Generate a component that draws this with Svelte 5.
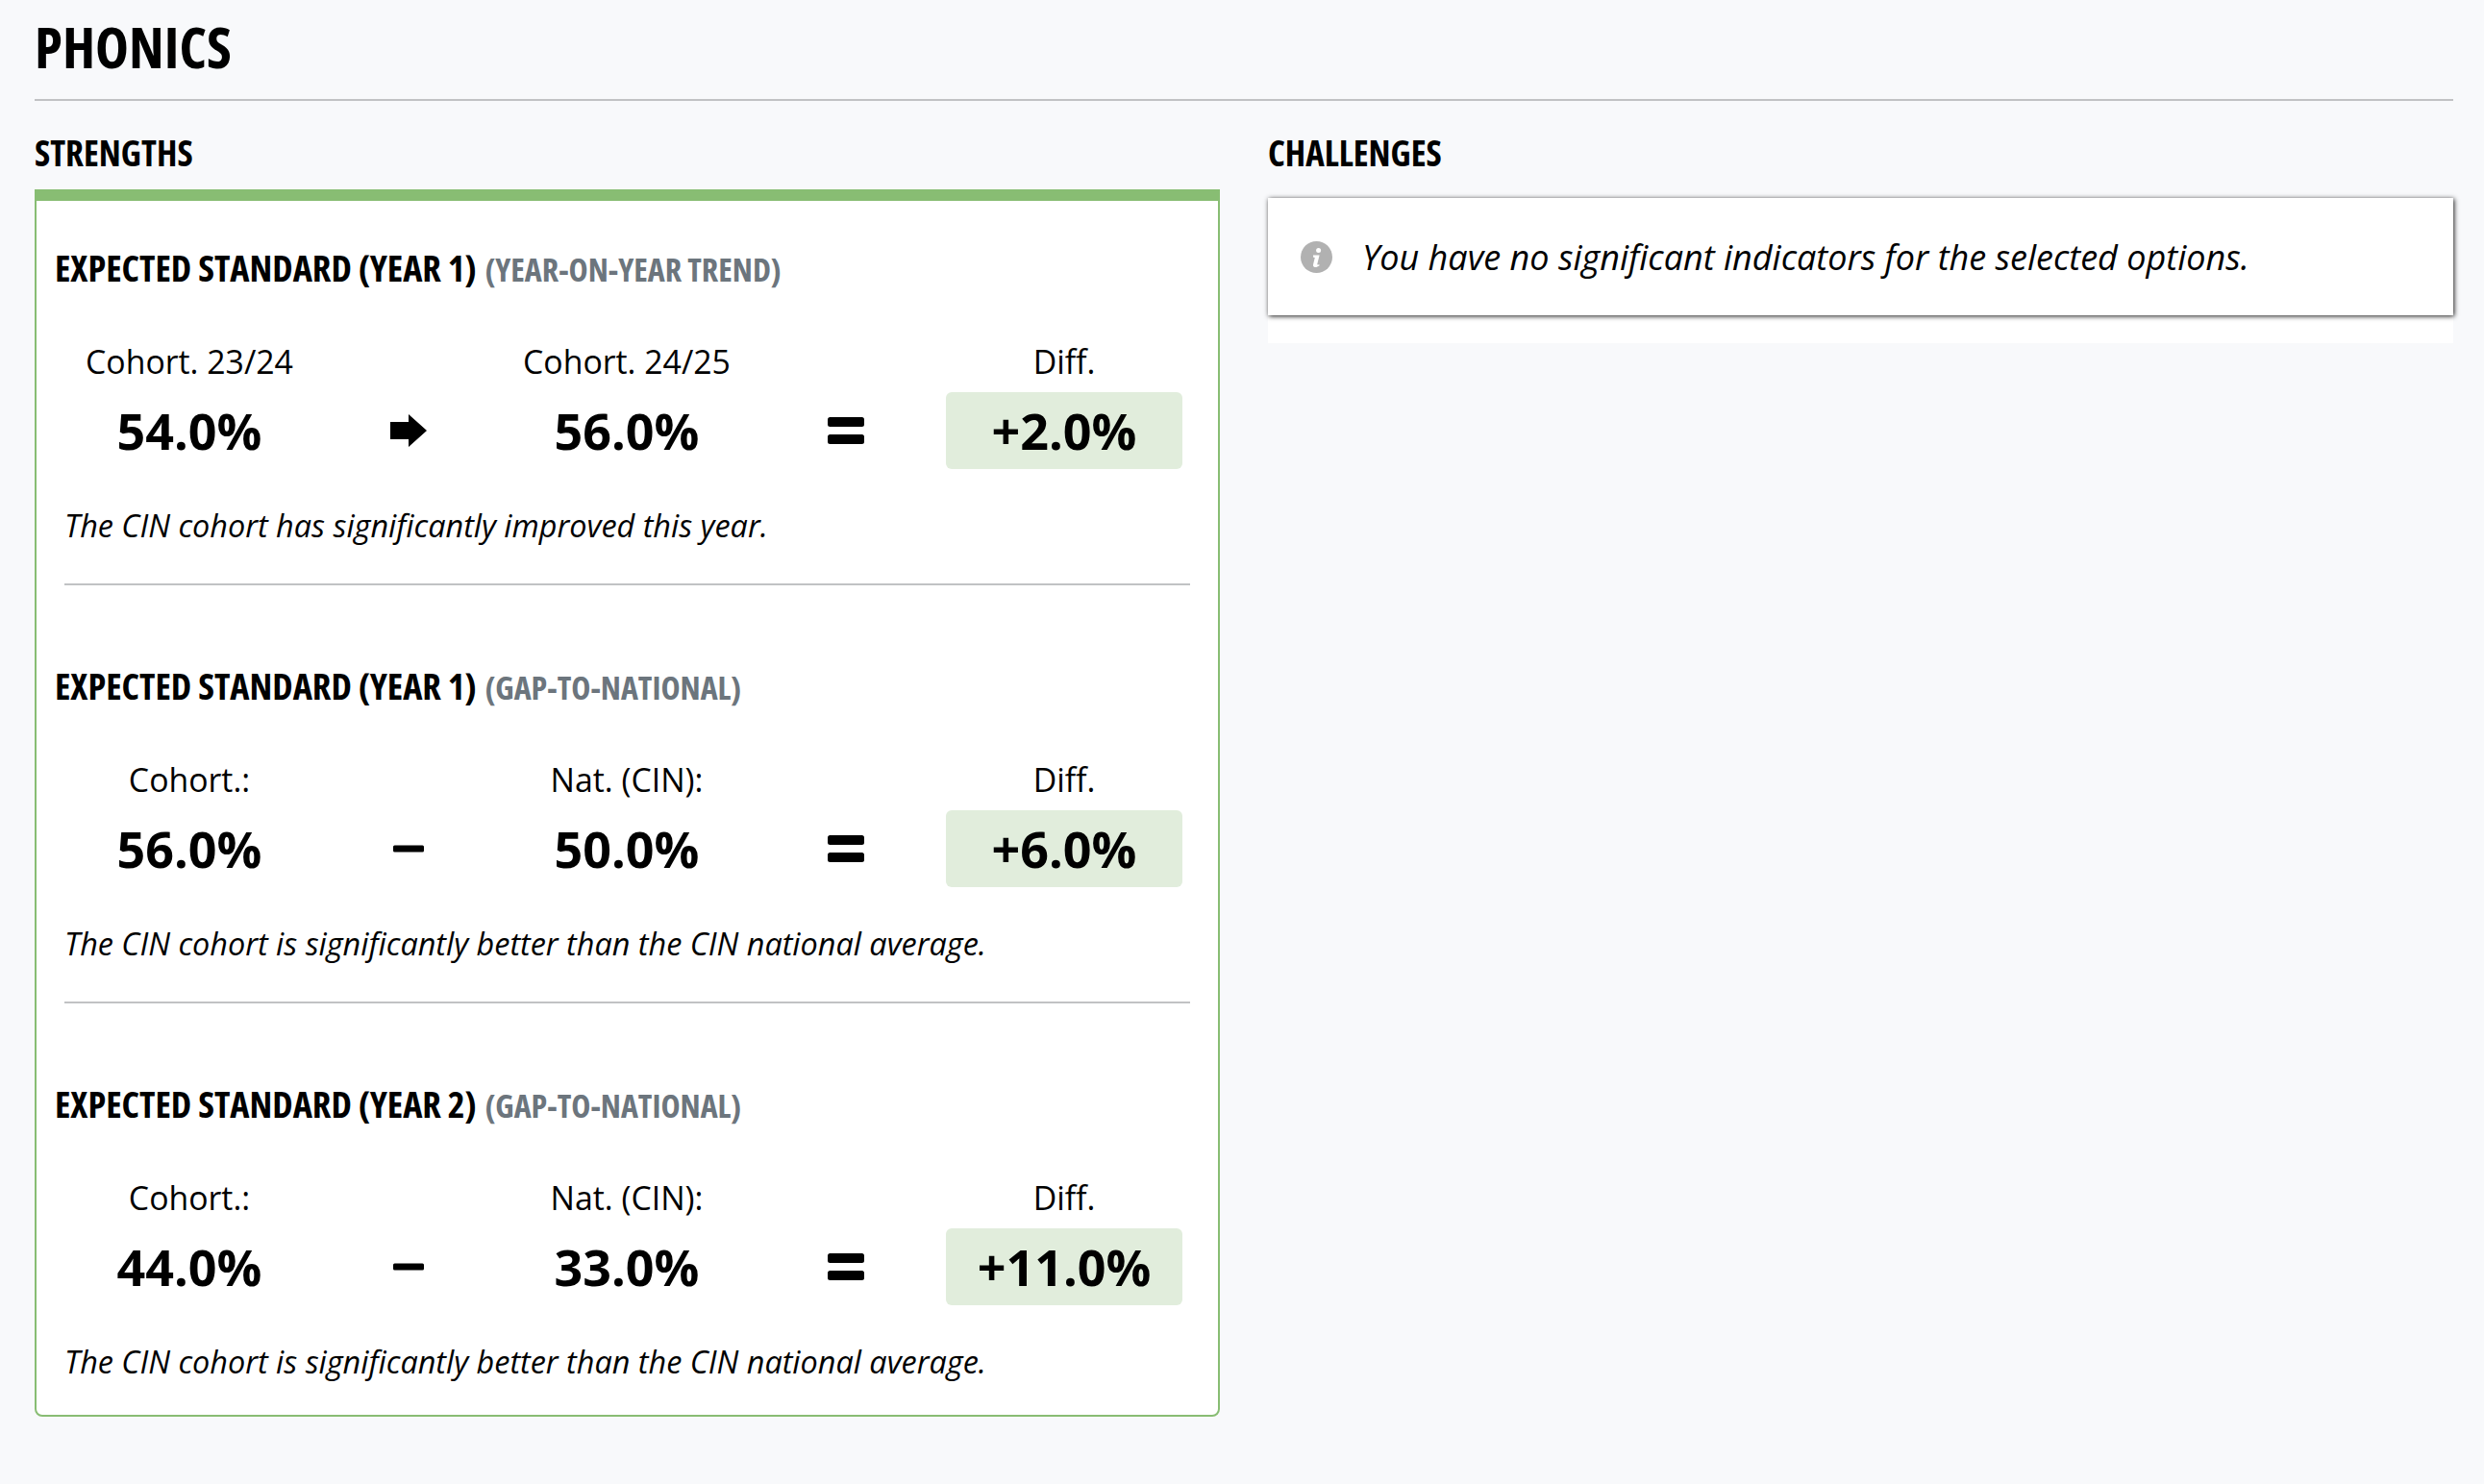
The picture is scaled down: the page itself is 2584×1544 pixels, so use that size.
<script>
	const sections = [
		{
			title: 'Expected Standard (Year 1)',
			kind: '(Year-on-year trend)',
			labels: ['Cohort. 23/24', 'Cohort. 24/25'],
			values: ['54.0%', '56.0%'],
			diff: '+2.0%',
			op: 'arrow',
			note: 'The CIN cohort has significantly improved this year.'
		},
		{
			title: 'Expected Standard (Year 1)',
			kind: '(Gap-to-national)',
			labels: ['Cohort.:', 'Nat. (CIN):'],
			values: ['56.0%', '50.0%'],
			diff: '+6.0%',
			op: 'minus',
			note: 'The CIN cohort is significantly better than the CIN national average.'
		},
		{
			title: 'Expected Standard (Year 2)',
			kind: '(Gap-to-national)',
			labels: ['Cohort.:', 'Nat. (CIN):'],
			values: ['44.0%', '33.0%'],
			diff: '+11.0%',
			op: 'minus',
			note: 'The CIN cohort is significantly better than the CIN national average.'
		}
	];
</script>

<div class="page">
	<h1>Phonics</h1>
	<div class="columns">
		<div>
			<h2>Strengths</h2>
			<div class="card">
				{#each sections as s, i}
					<section class:last={i === sections.length - 1}>
						<h3>{s.title} <span>{s.kind}</span></h3>
						<div class="sum">
							<div class="label">{s.labels[0]}</div>
							<div></div>
							<div class="label">{s.labels[1]}</div>
							<div></div>
							<div class="label">Diff.</div>

							<div class="value">{s.values[0]}</div>
							<div class="op">
								{#if s.op === 'arrow'}
									<svg width="38" height="34" viewBox="0 0 38 34"><path d="M0 8h19V0l19 17-19 17v-8H0z" /></svg>
								{:else}
									<svg width="32" height="8" viewBox="0 0 32 8"><rect width="32" height="7" y="0.5" rx="1.5" /></svg>
								{/if}
							</div>
							<div class="value">{s.values[1]}</div>
							<div class="op">
								<svg width="38" height="28" viewBox="0 0 38 28"><rect width="38" height="10" rx="2.5" /><rect y="18" width="38" height="10" rx="2.5" /></svg>
							</div>
							<div class="value diff">{s.diff}</div>
						</div>
						<p class="note">{s.note}</p>
					</section>
				{/each}
			</div>
		</div>
		<div>
			<h2>Challenges</h2>
			<div class="empty">
				<div class="alert">
					<svg width="33" height="33" viewBox="0 0 33 33">
						<circle cx="16.5" cy="16.5" r="16.5" fill="#b1b1b1" />
						<circle cx="18.6" cy="9.4" r="2.5" fill="#fff" />
						<path d="M13 14.6h6.6l-2.3 9.2c-.2.8.5 1 1.9.2l.4 1.2c-2 1.5-3.6 2-5 1.7-1.4-.3-1.9-1.3-1.5-2.9l1.7-6.9-1.6-.3z" fill="#fff" />
					</svg>
					<em>You have no significant indicators for the selected options.</em>
				</div>
			</div>
		</div>
	</div>
</div>

<style>
	:global(body) {
		background: #f8f9fb;
		color: #000;
		font-family: 'Open Sans', sans-serif;
	}

	.page {
		padding: 0 32px 0 36px;
		min-height: 1544px;
		box-sizing: border-box;
	}

	h1,
	h2,
	h3 {
		font-stretch: 75%;
		font-weight: 700;
		text-transform: uppercase;
		margin: 0;
	}

	h1 {
		font-size: 59px;
		line-height: 76px;
		padding-top: 10px;
		padding-bottom: 17px;
		border-bottom: 2px solid #c1c2c4;
	}

	h2 {
		font-size: 37px;
		line-height: 48px;
		margin-top: 30px;
		margin-bottom: 14px;
	}

	h3 {
		font-size: 38.3px;
		line-height: 48px;
		margin-left: 19px;
	}

	h3 span {
		color: #6c757d;
		font-size: 34px;
		margin-left: 2px;
	}

	.columns {
		display: grid;
		grid-template-columns: 1233px 1233px;
		gap: 50px;
	}

	.card {
		background: #fff;
		border: 2px solid #88bd73;
		border-top-width: 12px;
		border-radius: 0 0 8px 8px;
		height: 1277px;
		box-sizing: border-box;
	}

	section {
		height: 435px;
		padding-top: 45px;
		box-sizing: border-box;
	}

	.sum {
		display: grid;
		grid-template-columns: 246px 209px 246px 209px 246px;
		margin: 50px 0 0 36px;
		align-items: center;
	}

	.label {
		font-size: 33.8px;
		line-height: 44px;
		text-align: center;
		margin-bottom: 10px;
	}

	.value {
		font-size: 52px;
		font-weight: 700;
		line-height: 80px;
		text-align: center;
	}

	.diff {
		background: #e1eddc;
		border-radius: 6px;
	}

	.op {
		display: flex;
		justify-content: center;
		align-items: center;
	}

	.note {
		font-size: 32.4px;
		font-style: italic;
		line-height: 44px;
		margin: 36px 0 0 29px;
	}

	section:not(.last) .note {
		padding-bottom: 39px;
		margin-right: 29px;
		border-bottom: 2px solid #c1c2c4;
	}

	.empty {
		background: #fff;
		height: 151px;
		margin-top: 23px;
	}

	.alert {
		display: flex;
		align-items: center;
		gap: 31px;
		height: 122px;
		padding-left: 34px;
		box-sizing: border-box;
		background: #fff;
		box-shadow: 1px 1px 5px rgba(0, 0, 0, 0.9);
		font-size: 36px;
	}
</style>
